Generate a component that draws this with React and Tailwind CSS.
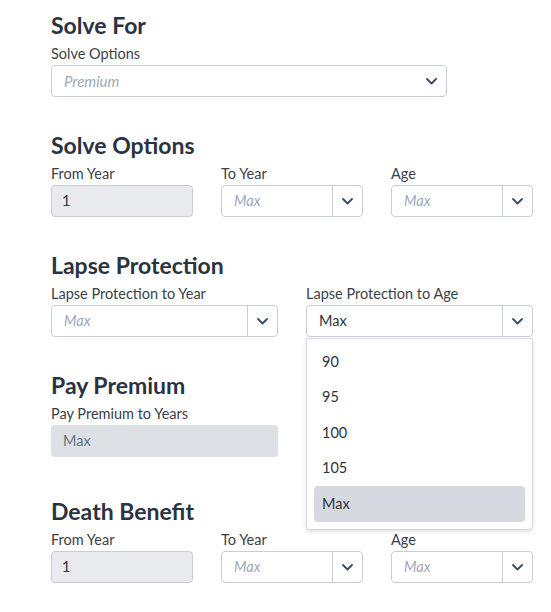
import React from 'react';

const Chevron = () => (
    <svg width="11" height="7" viewBox="0 0 11 7">
        <path d="M1 1l4.5 4.5L10 1" fill="none" stroke="#3d4b60" strokeWidth="1.8" strokeLinecap="round" strokeLinejoin="round" />
    </svg>
);

const Heading = ({ children }) => (
    <h2 className="text-[23px] leading-7 font-bold text-[#2b3240] mb-[5px]">{children}</h2>
);

const Label = ({ children }) => (
    <div className="text-[14.5px] leading-5 text-[#3a3f48] mb-[1px]">{children}</div>
);

const ReadOnly = ({ value, muted }) =>
    muted ? (
        <div className="h-8 rounded-[4px] bg-[#dde1e6] px-3 text-[14.5px] leading-8 text-[#6b7280]">{value}</div>
    ) : (
        <div className="h-8 rounded-[4px] border border-[#c9cdd3] bg-[#e8eaed] px-[10px] text-[14.5px] leading-[30px] text-[#2f3340]">{value}</div>
    );

const SplitSelect = ({ value, placeholder }) => (
    <div className="h-8 flex rounded-[4px] border border-[#c9ced6] bg-white">
        {value ? (
            <span className="flex-1 px-3 text-[14.5px] leading-[30px] text-[#2f3340]">{value}</span>
        ) : (
            <span className="flex-1 px-3 text-[14.5px] leading-[30px] italic text-[#a1a9b6]">{placeholder}</span>
        )}
        <div className="w-[30px] border-l border-[#c9ced6] flex items-center justify-center">
            <Chevron />
        </div>
    </div>
);

const App = () => {
    const options = ['90', '95', '100', '105', 'Max'];

    return (
        <div className="min-h-screen bg-white font-['Lato',sans-serif] pl-[51px] pt-[11px]">
            <div className="w-[482px] flex flex-col gap-[34px]">
                {/* Solve For */}
                <section>
                    <Heading>Solve For</Heading>
                    <Label>Solve Options</Label>
                    <div className="w-[396px] h-8 flex items-center rounded-[4px] border border-[#c9ced6] bg-white pl-3 pr-[9px]">
                        <span className="flex-1 text-[15px] italic text-[#a1a9b6]">Premium</span>
                        <Chevron />
                    </div>
                </section>

                {/* Solve Options */}
                <section>
                    <Heading>Solve Options</Heading>
                    <div className="grid grid-cols-3 gap-x-7">
                        <div>
                            <Label>From Year</Label>
                            <ReadOnly value="1" />
                        </div>
                        <div>
                            <Label>To Year</Label>
                            <SplitSelect placeholder="Max" />
                        </div>
                        <div>
                            <Label>Age</Label>
                            <SplitSelect placeholder="Max" />
                        </div>
                    </div>
                </section>

                {/* Lapse Protection */}
                <section className="relative z-10">
                    <Heading>Lapse Protection</Heading>
                    <div className="grid grid-cols-2 gap-x-7">
                        <div>
                            <Label>Lapse Protection to Year</Label>
                            <SplitSelect placeholder="Max" />
                        </div>
                        <div>
                            <Label>Lapse Protection to Age</Label>
                            <div className="relative">
                                <SplitSelect value="Max" />
                                <ul className="absolute left-0 right-0 top-[33px] rounded-b-[4px] border border-[#d6dae0] bg-white px-[7px] pt-[5px] pb-[7px] shadow-[0_2px_4px_rgba(0,0,0,0.12)]">
                                    {options.map((opt) => (
                                        <li
                                            key={opt}
                                            className={`h-[35.5px] flex items-center px-2 text-[14.5px] text-[#2f3340] rounded-[4px] ${opt === 'Max' ? 'bg-[#d6dae0]' : ''}`}
                                        >
                                            {opt}
                                        </li>
                                    ))}
                                </ul>
                            </div>
                        </div>
                    </div>
                </section>

                {/* Pay Premium */}
                <section>
                    <Heading>Pay Premium</Heading>
                    <div className="grid grid-cols-2 gap-x-7">
                        <div>
                            <Label>Pay Premium to Years</Label>
                            <ReadOnly value="Max" muted />
                        </div>
                    </div>
                </section>

                {/* Death Benefit */}
                <section className="mt-[6px]">
                    <Heading>Death Benefit</Heading>
                    <div className="grid grid-cols-3 gap-x-7">
                        <div>
                            <Label>From Year</Label>
                            <ReadOnly value="1" />
                        </div>
                        <div>
                            <Label>To Year</Label>
                            <SplitSelect placeholder="Max" />
                        </div>
                        <div>
                            <Label>Age</Label>
                            <SplitSelect placeholder="Max" />
                        </div>
                    </div>
                </section>
            </div>
        </div>
    );
};

export default App;
